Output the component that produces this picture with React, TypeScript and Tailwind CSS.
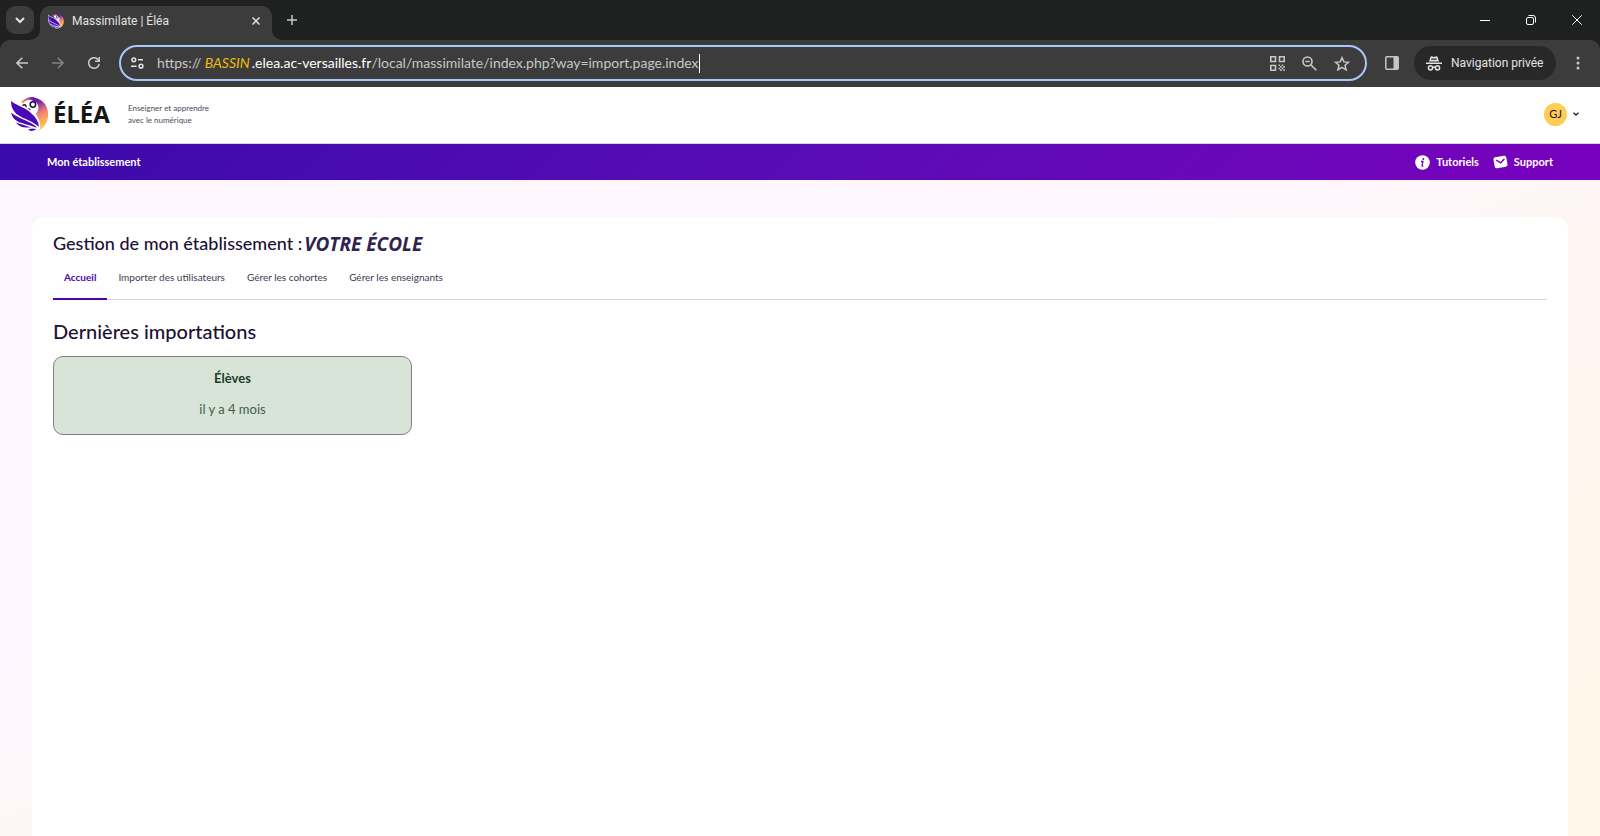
import type { ReactNode } from "react";

const tabs = ["Accueil", "Importer des utilisateurs", "Gérer les cohortes", "Gérer les enseignants"];

export default function App() {
  return (
    <div className="flex min-h-screen flex-col bg-white font-['Lato',sans-serif]">
      {/* Browser window */}
      <TabStrip />
      <Toolbar />

      {/* Site header */}
      <header className="flex h-[57px] items-center border-b border-gray-300 pr-[21px] pb-[2px] pl-[10px]">
        <a href="#" aria-label="Éléa" className="flex items-center gap-1">
          <Parrot className="h-[34px] w-[39px]" />
          <span className="font-['Noto_Sans',sans-serif] text-2xl font-bold text-[#161616]">ÉLÉA</span>
        </a>
        <p className="ml-[18px] text-[8px] leading-3 text-[#4a4a5a]">
          Enseigner et apprendre
          <br />
          avec le numérique
        </p>
        <button aria-label="Menu utilisateur" className="ml-auto flex items-center gap-[6px]">
          <span className="flex size-[23px] items-center justify-center rounded-full bg-[#ffcd50] text-[11px] text-[#1d1036]">
            GJ
          </span>
          <svg width="6" height="4" viewBox="0 0 6 4" fill="none" stroke="#222" strokeWidth="1.4">
            <path d="M.5.7 3 3 5.5.7" />
          </svg>
        </button>
      </header>

      <nav className="flex h-9 items-center bg-linear-135 from-[#3a08ab] to-[#7800bd] px-[47px] text-[11px] font-bold text-white">
        <a href="#">Mon établissement</a>
        <a href="#" className="ml-auto flex items-center gap-[6px]">
          <InfoIcon />
          Tutoriels
        </a>
        <a href="#" className="ml-[14px] flex items-center gap-[6px]">
          <MailIcon />
          Support
        </a>
      </nav>

      <main className="flex flex-1 flex-col bg-linear-to-br from-[#fdf6ff] from-35% via-[#fff6f3] via-55% to-[#fff7ea] to-90% px-8 pt-[37px]">
        <div className="flex-1 rounded-t-xl bg-white px-[21px] pt-[14px] text-[#1d1036]">
          <h1 className="flex items-center gap-[2px] text-lg leading-6 font-medium">
            Gestion de mon établissement :
            <em className="pt-[2px] font-['Open_Sans',sans-serif] text-[19px] leading-[22px] font-bold text-[#2f2350]">VOTRE ÉCOLE</em>
          </h1>

          <div className="mt-[10px] flex border-b border-gray-300 text-[10px]">
            {tabs.map((tab, i) => (
              <a
                key={tab}
                href="#"
                className={
                  i === 0
                    ? "-mb-px h-[35px] border-b-2 border-[#4b06a8] px-[11px] leading-6 font-bold text-[#4b06a8]"
                    : "h-[34px] px-[11px] leading-6 text-[#3f3a50]"
                }
              >
                {tab}
              </a>
            ))}
          </div>

          <h2 className="mt-[19px] text-xl leading-6 font-medium">Dernières importations</h2>
          <section className="mt-[13px] flex h-[79px] w-[359px] flex-col items-center gap-[11px] rounded-[10px] border border-[#808080] bg-[#d8e4d7] pt-[11px] text-[13px] leading-5 text-[#1c3d2a]">
            <h3 className="font-bold">Élèves</h3>
            <p className="text-[#40604c]">il y a 4 mois</p>
          </section>
        </div>
      </main>
    </div>
  );
}

function TabStrip() {
  return (
    <div className="flex h-10 items-center bg-[#1f2020] font-['Roboto',sans-serif] text-[#e3e3e3]">
      <button aria-label="Rechercher des onglets" className="ml-[6px] flex size-7 items-center justify-center rounded-[9px] bg-[#3c3c3c]">
        <svg width="10" height="7" viewBox="0 0 10 7" fill="none" stroke="currentColor" strokeWidth="2">
          <path d="m1 1 4 4 4-4" />
        </svg>
      </button>
      <div className="relative mt-[6px] ml-[6px] flex h-[34px] w-[232px] items-center rounded-t-[10px] bg-[#3c3c3c] pb-[5px] pl-2">
        <Parrot className="h-4 w-4" />
        <span className="ml-2 text-xs">Massimilate | Éléa</span>
        <button aria-label="Fermer" className="mr-3 ml-auto">
          <svg width="8" height="8" viewBox="0 0 8 8" stroke="currentColor" strokeWidth="1.5">
            <path d="m.5.5 7 7m0-7-7 7" />
          </svg>
        </button>
        {/* flared feet of the active tab */}
        <svg className="absolute bottom-0 -left-[10px]" width="10" height="10" fill="#3c3c3c">
          <path d="M10 0v10H0A10 10 0 0 0 10 0" />
        </svg>
        <svg className="absolute -right-[10px] bottom-0" width="10" height="10" fill="#3c3c3c">
          <path d="M0 0v10h10A10 10 0 0 1 0 0" />
        </svg>
      </div>
      <button aria-label="Nouvel onglet" className="ml-[15px]">
        <svg width="10" height="10" viewBox="0 0 10 10" stroke="#c7c7c7" strokeWidth="1.5">
          <path d="M5 0v10M0 5h10" />
        </svg>
      </button>
      <div className="mr-[18px] ml-auto flex items-center gap-9 text-white">
        <WindowButton label="Réduire">
          <path d="M0 5.5h10" />
        </WindowButton>
        <WindowButton label="Restaurer">
          <rect x=".5" y="2.5" width="7" height="7" rx="1.5" />
          <path d="M2.5.5H7A2.5 2.5 0 0 1 9.5 3v4.5" />
        </WindowButton>
        <WindowButton label="Fermer la fenêtre">
          <path d="m.3.3 9.4 9.4m0-9.4L.3 9.7" />
        </WindowButton>
      </div>
    </div>
  );
}

function WindowButton({ label, children }: { label: string; children: ReactNode }) {
  return (
    <button aria-label={label}>
      <svg width="10" height="10" viewBox="0 0 10 10" fill="none" stroke="currentColor">
        {children}
      </svg>
    </button>
  );
}

function Toolbar() {
  return (
    <div className="bg-[#1f2020] text-[#c7c7c7]">
      <div className="flex h-[47px] items-center rounded-t-[10px] bg-[#3c3c3c] pr-5 pb-px pl-4">
        <div className="flex w-[103px] gap-6">
          <button aria-label="Précédent">
            <svg width="12" height="12" viewBox="0 0 12 12" fill="none" stroke="currentColor" strokeWidth="1.6">
              <path d="M12 6H1.2M6.3.7 1 6l5.3 5.3" />
            </svg>
          </button>
          <button aria-label="Suivant" className="text-[#808080]">
            <svg width="12" height="12" viewBox="0 0 12 12" fill="none" stroke="currentColor" strokeWidth="1.6">
              <path d="M0 6h10.8M5.7.7 11 6l-5.3 5.3" />
            </svg>
          </button>
          <button aria-label="Actualiser">
            <svg width="12" height="12" viewBox="0 0 12 12" fill="none" stroke="currentColor" strokeWidth="1.6">
              <path d="M11.2 6.8A5.3 5.3 0 1 1 10.2 2.8L11.2 4M11.3 0v4.3H7" />
            </svg>
          </button>
        </div>

        <div className="flex h-9 flex-1 items-center rounded-full border-2 border-[#a8c7fa] pr-[15px] pl-[10px]">
          <button aria-label="Informations sur le site">
            <svg width="13" height="12" viewBox="0 0 13 12" fill="none" stroke="#e3e3e3" strokeWidth="1.5">
              <circle cx="2.8" cy="2.8" r="1.9" />
              <path d="M7 2.8h5M0 9.2h5.500" />
              <circle cx="10" cy="9.2" r="1.9" />
            </svg>
          </button>
          <label htmlFor="url" className="ml-[13px] text-sm whitespace-pre">
            https://{" "}
            <em className="mr-[2px] text-[#f0bd10]">BASSIN</em>
            <span className="text-white">.elea.ac-versailles.fr</span>
          </label>
          <input
            id="url"
            defaultValue="/local/massimilate/index.php?way=import.page.index"
            className="field-sizing-content text-sm outline-none"
          />
          <span className="h-[19px] w-px bg-white" />
          <div className="ml-auto flex items-center gap-[17px]">
            <button aria-label="Créer un QR code">
              <QrIcon />
            </button>
            <button aria-label="Zoom">
              <svg width="15" height="15" viewBox="0 0 15 15" fill="none" stroke="currentColor" strokeWidth="1.6">
                <circle cx="5.5" cy="5.5" r="4.5" />
                <path d="m9 9 5.3 5.3M3.3 5.5h4.4" />
              </svg>
            </button>
            <button aria-label="Ajouter aux favoris">
              <svg width="16" height="15" viewBox="0 0 16 15" fill="none" stroke="currentColor" strokeWidth="1.5">
                <path d="m8 1.7 1.9 4.200 4.600.4-3.500 3 1.100 4.500L8 11.400l-4.100 2.400L5 9.300l-3.500-3 4.600-.4z" />
              </svg>
            </button>
          </div>
        </div>

        <button aria-label="Panneau latéral" className="ml-[18px]">
          <svg width="14" height="14" viewBox="0 0 14 14">
            <rect x=".8" y=".8" width="12.4" height="12.4" rx="1" fill="none" stroke="currentColor" strokeWidth="1.5" />
            <path d="M8.5 1H13v12H8.5z" fill="currentColor" />
          </svg>
        </button>
        <button className="ml-[15px] flex h-[34px] w-[142px] items-center gap-[9px] rounded-full bg-[#282828] pl-3 font-['Roboto',sans-serif] text-xs whitespace-nowrap text-[#e3e3e3]">
          <svg className="shrink-0" width="16" height="15" viewBox="0 0 16 15">
            <path d="M0 6.5h16V8H0zM3 5.500 4.500.8Q4.800 0 5.600.2L8 .9l2.400-.7q.8-.2 1.100.6L13 5.500z" fill="currentColor" />
            <path d="M5.3 2.5h5.400v1.300H5z" fill="#282828" />
            <g fill="none" stroke="currentColor" strokeWidth="1.5">
              <circle cx="4.5" cy="11.8" r="2.1" />
              <circle cx="11.5" cy="11.8" r="2.1" />
              <path d="M6.6 11.5q1.400-.8 2.800 0" />
            </g>
          </svg>
          Navigation privée
        </button>
        <button aria-label="Menu" className="ml-5">
          <svg width="4" height="14" viewBox="0 0 4 14" fill="currentColor">
            <circle cx="2" cy="2" r="1.5" />
            <circle cx="2" cy="7" r="1.5" />
            <circle cx="2" cy="12" r="1.5" />
          </svg>
        </button>
      </div>
    </div>
  );
}

function QrIcon() {
  return (
    <svg width="15" height="15" viewBox="0 0 15 15" fill="none" stroke="currentColor" strokeWidth="1.6">
      <path d="M.8.8h4.7v4.7H.8zM9.5.8h4.7v4.7H9.5zM.8 9.5h4.7v4.7H.8z" />
      <path
        d="M8.5 8.5h1.6v1.6H8.5zM11.7 8.5h1.6v1.6h-1.6zM10.1 10.1h1.6v1.6h-1.6zM13.3 10.1h1.6v1.6h-1.6zM8.5 11.7h1.6v1.6H8.5zM11.7 11.7h1.6v1.6h-1.6zM10.1 13.3h1.6v1.6h-1.6zM13.3 13.3h1.6v1.6h-1.6z"
        fill="currentColor"
        stroke="none"
      />
    </svg>
  );
}

function InfoIcon() {
  return (
    <svg width="15" height="15" viewBox="0 0 15 15">
      <circle cx="7.5" cy="7.5" r="7.3" fill="#fff" />
      <circle cx="8.3" cy="4" r="1" fill="#7000bb" />
      <path d="M6 6.5h1.9L7 10.7q-.1.7 1.3.4" fill="none" stroke="#7000bb" strokeWidth="1.3" />
    </svg>
  );
}

function MailIcon() {
  return (
    <svg width="15" height="14" viewBox="0 0 15 14">
      <rect x="1" y="1.5" width="13" height="11" rx="2" fill="#fff" transform="rotate(-10 7.5 7)" />
      <path d="m3.3 5.2 4.3 2.700 3.700-4" fill="none" stroke="#7000bb" strokeWidth="1.5" />
    </svg>
  );
}

function Parrot({ className }: { className: string }) {
  return (
    <svg className={className} viewBox="9 5 112 100">
      <defs>
        <linearGradient id="crest" x1="0" y1="0" x2=".3" y2="1">
          <stop offset="0" stopColor="#5a08b4" />
          <stop offset=".25" stopColor="#7a20a4" />
          <stop offset=".6" stopColor="#ee8472" />
          <stop offset="1" stopColor="#ffc650" />
        </linearGradient>
        <linearGradient id="brow" x1="0" y1="0" x2="1" y2="0">
          <stop offset="0" stopColor="#ffb94a" />
          <stop offset=".5" stopColor="#c0508a" />
          <stop offset="1" stopColor="#5a08b4" />
        </linearGradient>
      </defs>
      {/* head and back */}
      <path d="M48 20C60 8 84 14 92 36c6 16 8 34 2 54L60 60z" fill="#fff" />
      <path d="M64 6C96 4 120 26 120 56c0 22-11 40-30 48 5-12 6-22 2-34l-8-16C97 40 92 20 74 15z" fill="url(#crest)" />
      <path d="M40 20C50 8 64 4 78 6l2 12C68 10 56 12 46 24z" fill="url(#brow)" />
      <circle cx="75" cy="27" r="8" fill="#fff" stroke="#1d1036" strokeWidth="4.5" />
      <path d="M44 31q8-7 11 1 0 6-4 8" fill="none" stroke="#1d1036" strokeWidth="4" />
      <path d="M56 43q6-9 12-1l-3 11z" fill="#1d1036" />
      {/* wing */}
      <g fill="#4a08b6" stroke="#fff" strokeWidth="4">
        <path d="M58 102c6-8 18-9 30-3-6 8-20 11-30 3z" />
        <path d="M21 75c14 8 34 4 54 20-24 5-46 0-54-20z" />
        <path d="M8 45c10 14 30 18 48 24 14 5 28 14 35 30C68 92 52 86 34 81 20 76 10 64 8 45z" />
        <path d="M8 12c18 18 42 18 60 36 17 14 29 30 26 49C76 80 60 75 40 66 22 58 8 42 8 12z" />
      </g>
    </svg>
  );
}
